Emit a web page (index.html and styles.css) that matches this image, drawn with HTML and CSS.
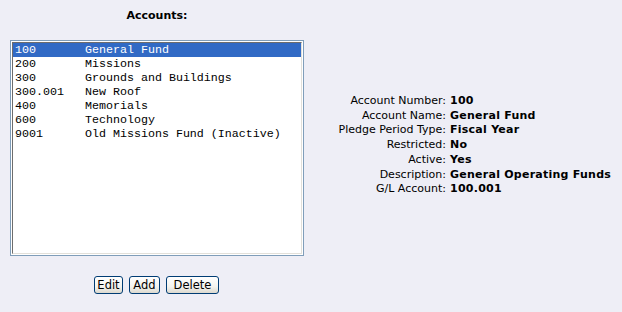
FILE: index.html
```html
<!DOCTYPE html>
<html lang="en">

<head>
    <meta charset="UTF-8">
    <title>Accounts</title>
    <link rel="stylesheet" href="styles.css">
</head>

<body>
    <div class="page">
        <div class="accounts">
            <h2 class="title">Accounts:</h2>
            <div class="listbox">
                <div class="list-inner">
                    <div class="item selected">100       General Fund</div>
                    <div class="item">200       Missions</div>
                    <div class="item">300       Grounds and Buildings</div>
                    <div class="item">300.001   New Roof</div>
                    <div class="item">400       Memorials</div>
                    <div class="item">600       Technology</div>
                    <div class="item">9001      Old Missions Fund (Inactive)</div>
                </div>
            </div>
            <div class="buttons">
                <button class="btn btn-edit">Edit</button>
                <button class="btn btn-add">Add</button>
                <button class="btn btn-delete">Delete</button>
            </div>
        </div>
        <div class="details">
            <span class="label">Account Number:</span><span class="value">100</span>
            <span class="label">Account Name:</span><span class="value">General Fund</span>
            <span class="label">Pledge Period Type:</span><span class="value">Fiscal Year</span>
            <span class="label">Restricted:</span><span class="value">No</span>
            <span class="label">Active:</span><span class="value">Yes</span>
            <span class="label">Description:</span><span class="value">General Operating Funds</span>
            <span class="label">G/L Account:</span><span class="value">100.001</span>
        </div>
    </div>
</body>

</html>
```

FILE: styles.css
```css
body {
    margin: 0;
    background: #eeeef6;
    font-family: "DejaVu Sans", Verdana, sans-serif;
    font-size: 11px;
    color: #000;
}

.page {
    display: flex;
    padding: 8px 0 0 10px;
}

.accounts {
    width: 294px;
    display: flex;
    flex-direction: column;
    align-items: center;
}

.title {
    margin: 0;
    font-size: 11px;
    line-height: 15px;
    font-weight: bold;
}

.listbox {
    box-sizing: border-box;
    width: 294px;
    height: 216px;
    margin-top: 17px;
    border: 1px solid #7f9db9;
    padding: 1px;
    background: #fff;
}

.list-inner {
    box-sizing: border-box;
    height: 100%;
    border: 1px solid;
    border-color: #6d6d6d #e2e0da #e2e0da #6d6d6d;
}

.item {
    height: 14px;
    line-height: 15px;
    padding-left: 2px;
    white-space: pre;
    font-family: "Liberation Mono", "Courier New", monospace;
    font-size: 11.67px;
    color: #000;
}

.item.selected {
    background: #316ac5;
    color: #fff;
}

.buttons {
    display: flex;
    gap: 6px;
    margin-top: 20px;
    margin-left: -1px;
}

.btn {
    box-sizing: border-box;
    height: 18px;
    padding: 0;
    border: 1px solid #003c74;
    border-radius: 3px;
    background: linear-gradient(#ffffff 0%, #f4f3ee 60%, #dcd9cf 100%);
    font-family: "DejaVu Sans", Verdana, sans-serif;
    font-size: 11.5px;
    color: #000;
}

.btn-edit {
    width: 29px;
}

.btn-add {
    width: 31px;
}

.btn-delete {
    width: 53px;
}

.details {
    display: grid;
    grid-template-columns: 142px auto;
    column-gap: 4px;
    align-self: flex-start;
    margin-top: 86px;
    line-height: 14.7px;
}

.label {
    text-align: right;
}

.value {
    font-weight: bold;
    letter-spacing: 0.25px;
}
```
